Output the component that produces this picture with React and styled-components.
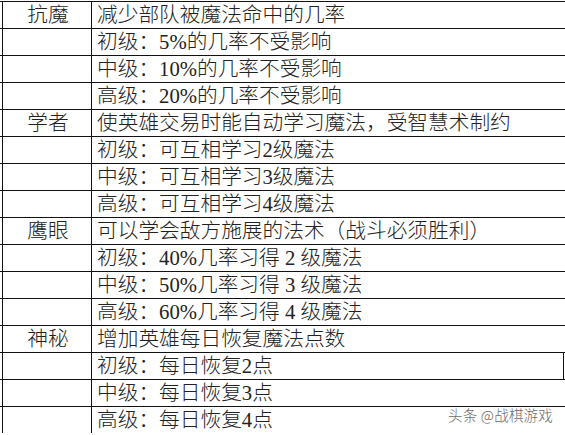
import React from "react";
import styled, { createGlobalStyle } from "styled-components";

const Global = createGlobalStyle`
  html, body { margin: 0; padding: 0; background: #fff; }
  body { width: 565px; height: 435px; overflow: hidden; }
`;

const Sheet = styled.div`
  position: relative;
  width: 565px;
  margin-top: 1px;
  font-family: "Liberation Serif", "Noto Sans CJK SC", serif;
  font-size: 20.7px;
  font-weight: 300;
  color: #222;
`;

const Row = styled.div`
  display: flex;
  height: 26px;
  border-top: 1px solid #111;
  &:last-child { border-bottom: 1px solid #111; }
`;

const NameCell = styled.div`
  box-sizing: border-box;
  width: 90px;
  flex: none;
  margin-left: 2px;
  border-left: 1px solid #111;
  border-right: 1px solid #111;
  display: flex;
  align-items: flex-end;
  justify-content: center;
  line-height: 26px;
  padding-left: 2px;
  white-space: nowrap;
`;

const TextCell = styled.div`
  flex: 1;
  display: flex;
  align-items: flex-end;
  padding-left: 5px;
  line-height: 26px;
  white-space: nowrap;
  margin-right: ${(p) => (p.$boxed ? "1px" : "0")};
  border-right: ${(p) => (p.$boxed ? "1px solid #111" : "none")};
`;

const Watermark = styled.div`
  position: absolute;
  right: 12px;
  bottom: 8px;
  font-family: "Noto Sans CJK SC", sans-serif;
  font-size: 14.5px;
  color: #6a6a6a;
  text-shadow: 0 0 2px #fff, 0 0 2px #fff;
  letter-spacing: 0.2px;
`;

const groups = [
  {
    name: "抗魔",
    desc: "减少部队被魔法命中的几率",
    levels: ["初级：5%的几率不受影响", "中级：10%的几率不受影响", "高级：20%的几率不受影响"],
  },
  {
    name: "学者",
    desc: "使英雄交易时能自动学习魔法，受智慧术制约",
    levels: ["初级：可互相学习2级魔法", "中级：可互相学习3级魔法", "高级：可互相学习4级魔法"],
  },
  {
    name: "鹰眼",
    desc: "可以学会敌方施展的法术（战斗必须胜利）",
    levels: ["初级：40%几率习得 2 级魔法", "中级：50%几率习得 3 级魔法", "高级：60%几率习得 4 级魔法"],
  },
  {
    name: "神秘",
    desc: "增加英雄每日恢复魔法点数",
    levels: ["初级：每日恢复2点", "中级：每日恢复3点", "高级：每日恢复4点"],
    boxed: 0,
  },
];

export default function App() {
  return (
    <>
      <Global />
      <Sheet>
        {groups.map((g) => (
          <React.Fragment key={g.name}>
            <Row>
              <NameCell>{g.name}</NameCell>
              <TextCell>{g.desc}</TextCell>
            </Row>
            {g.levels.map((l, i) => (
              <Row key={l}>
                <NameCell />
                <TextCell $boxed={g.boxed === i}>{l}</TextCell>
              </Row>
            ))}
          </React.Fragment>
        ))}
        <Watermark>头条 @战棋游戏</Watermark>
      </Sheet>
    </>
  );
}
